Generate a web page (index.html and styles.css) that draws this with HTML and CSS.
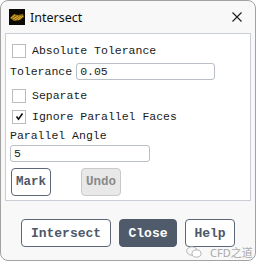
FILE: index.html
```html
<!DOCTYPE html>
<html lang="en">
<head>
    <meta charset="UTF-8">
    <title>Intersect</title>
    <link rel="stylesheet" href="styles.css">
</head>
<body>
    <div class="window">
        <div class="titlebar">
            <svg class="app-icon" width="16" height="16" viewBox="0 0 16 16">
                <rect width="16" height="16" fill="#0c0a04"/>
                <path d="M1 9 L5 5 L9 6 L14 5 L15 8 L11 11 L5 12 Z" fill="#8a6a12"/>
                <path d="M2 9 L6 6 M4 10 L9 7 M6 11 L12 7 M9 11 L14 7" stroke="#e0b030" stroke-width="1"/>
            </svg>
            <span class="title">Intersect</span>
            <svg class="close-x" width="10" height="10" viewBox="0 0 10 10">
                <path d="M0.5 0.5 L9.5 9.5 M9.5 0.5 L0.5 9.5" stroke="#1a1a1a" stroke-width="1.1"/>
            </svg>
        </div>

        <div class="panel">
            <div class="row row-check first">
                <span class="checkbox"></span>
                <span>Absolute Tolerance</span>
            </div>
            <div class="row row-field">
                <span class="label">Tolerance</span>
                <span class="input wide">0.05</span>
            </div>
            <div class="row row-check spaced">
                <span class="checkbox"></span>
                <span>Separate</span>
            </div>
            <div class="row row-check">
                <span class="checkbox">
                    <svg width="11" height="11" viewBox="0 0 11 11">
                        <path d="M2.5 5.5 L4.5 8.2 L8.5 2.5" fill="none" stroke="#111" stroke-width="1.6"/>
                    </svg>
                </span>
                <span>Ignore Parallel Faces</span>
            </div>
            <div class="row row-label">
                <span class="label">Parallel Angle</span>
            </div>
            <div class="row row-input">
                <span class="input narrow">5</span>
            </div>
            <div class="panel-buttons">
                <button class="btn small">Mark</button>
                <button class="btn small disabled">Undo</button>
            </div>
        </div>

        <div class="footer">
            <button class="btn intersect">Intersect</button>
            <button class="btn primary close">Close</button>
            <button class="btn help">Help</button>
        </div>

        <div class="watermark">
            <svg width="16" height="12" viewBox="0 0 16 12">
                <ellipse cx="6" cy="5" rx="5.3" ry="4.2" fill="none" stroke="#b5b5b5" stroke-width="1"/>
                <ellipse cx="10.5" cy="7.5" rx="4.5" ry="3.6" fill="#fff" stroke="#b5b5b5" stroke-width="1"/>
            </svg>
            <span>CFD之道</span>
        </div>
    </div>
</body>
</html>
```

FILE: styles.css
```css
* {
    margin: 0;
    padding: 0;
    box-sizing: border-box;
}

body {
    background: #ffffff;
    font-family: 'Liberation Mono', 'DejaVu Sans Mono', monospace;
}

.window {
    position: relative;
    width: 256px;
    height: 261px;
    background: #f8f8f8;
    border: 1px solid #a3a3a3;
    border-radius: 8px;
}

.titlebar {
    display: flex;
    align-items: center;
    height: 32px;
    padding-left: 8px;
    padding-right: 13px;
}

.app-icon {
    flex: none;
}

.title {
    font-family: 'Noto Sans', 'Open Sans', sans-serif;
    font-size: 12.5px;
    color: #111;
    margin-left: 5px;
    flex: 1;
}

.close-x {
    flex: none;
}

.panel {
    height: 168px;
    margin: 0 4px;
    background: #ffffff;
    border: 1px solid #c9cdd6;
    padding: 6px 4px 0 4px;
    font-size: 11.5px;
    color: #1a1a1a;
}

.row {
    display: flex;
    align-items: center;
}

.row-check {
    height: 21px;
}

.row-check.spaced {
    margin-top: 4px;
}

.row-field {
    height: 20px;
}

.row-label {
    height: 16px;
}

.row-input {
    height: 20px;
}

.checkbox {
    display: flex;
    align-items: center;
    justify-content: center;
    width: 14px;
    height: 14px;
    margin-left: 2px;
    margin-right: 6px;
    border: 1px solid #bcbcbc;
    background: #fff;
}

.label {
    margin-right: 4px;
}

.input {
    display: flex;
    align-items: center;
    height: 17px;
    padding-left: 3px;
    background: #fff;
    border: 1px solid #b9bec7;
    border-radius: 3px;
}

.input.wide {
    width: 139px;
}

.input.narrow {
    width: 140px;
}

.panel-buttons {
    display: flex;
    gap: 30px;
    margin-top: 5px;
    padding-left: 1px;
}

.btn {
    height: 28px;
    background: #fff;
    border: 1px solid #5d6778;
    border-radius: 4px;
    font-family: 'Liberation Mono', monospace;
    font-weight: bold;
    font-size: 13px;
    color: #4d5869;
}

.btn.small {
    width: 40px;
    font-size: 12.5px;
}

.btn.disabled {
    background: #e8e8e8;
    border-color: #c9c9c9;
    color: #8a8a8a;
}

.footer {
    display: flex;
    gap: 8px;
    margin-top: 18px;
    padding-left: 20px;
}

.btn.intersect {
    width: 90px;
}

.btn.close {
    width: 58px;
}

.btn.help {
    width: 50px;
}

.btn.primary {
    background: #4f5b6b;
    border-color: #4f5b6b;
    color: #fff;
}

.watermark {
    position: absolute;
    left: 185px;
    top: 243px;
    display: flex;
    align-items: center;
    gap: 8px;
    font-family: 'Noto Sans', 'Noto Sans CJK SC', sans-serif;
    font-size: 11px;
    color: #a9a9a9;
}
```
